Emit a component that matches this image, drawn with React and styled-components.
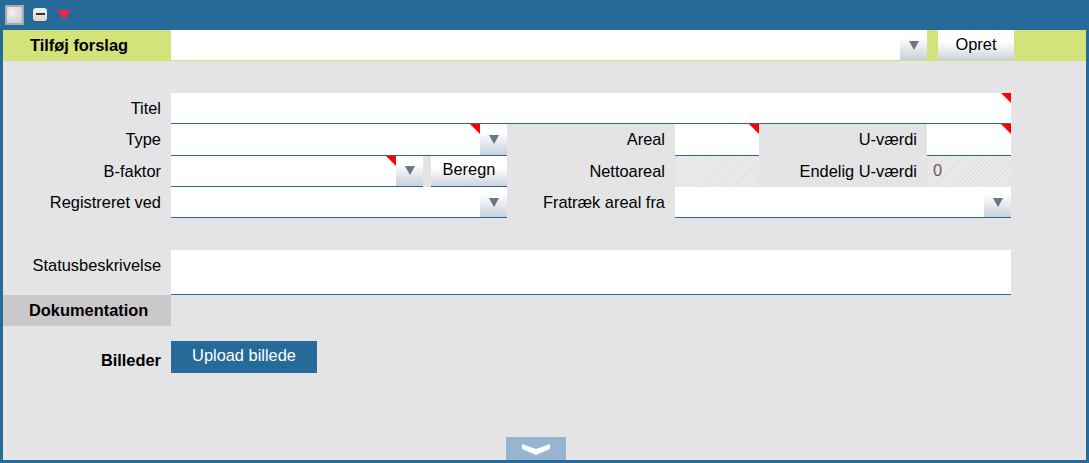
import React from "react";
import styled, { createGlobalStyle, css } from "styled-components";

const Global = createGlobalStyle`
  html, body { margin: 0; padding: 0; background: #e4e3e5; }
  body { font-family: "Liberation Sans", Arial, sans-serif; font-size: 16.4px; color: #000; overflow: hidden; }
`;

const Frame = styled.div`
  width: 1089px;
  height: 463px;
  box-sizing: border-box;
  background: #e4e3e5;
  border: solid #266a9a;
  border-width: 0 3px 3px 3px;
  display: flex;
  flex-direction: column;
  position: relative;
`;

const TopBar = styled.div`
  height: 30px;
  margin: 0 -3px;
  padding-left: 5px;
  background: #266a9a;
  display: flex;
  align-items: center;
  flex-shrink: 0;
`;

const WindowIcon = styled.div`
  width: 19px;
  height: 20px;
  box-sizing: border-box;
  margin-top: -1px;
  border: 2px solid #a9a9ad;
  background: radial-gradient(circle at 35% 35%, #f2f2f4, #c6c8cc);
`;

const MinIcon = styled.div`
  width: 14px;
  height: 13px;
  margin-left: 9px;
  margin-top: -2px;
  border-radius: 3px;
  background: linear-gradient(#e6eff6, #e2d8cc);
  display: flex;
  align-items: center;
  justify-content: center;
  &::before {
    content: "";
    width: 9px;
    height: 2px;
    background: #333;
  }
`;

const RedArrow = styled.svg`
  width: 14px;
  height: 10px;
  margin-left: 10px;
`;

const AddRow = styled.div`
  height: 31px;
  box-sizing: border-box;
  background: #d4e27b;
  display: flex;
  flex-shrink: 0;
`;

const AddTitle = styled.div`
  width: 168px;
  box-sizing: border-box;
  padding-left: 27px;
  line-height: 30px;
  font-weight: bold;
`;

const AddInput = styled.div`
  width: 756px;
  height: 30px;
  background: #fff;
  display: flex;
  justify-content: flex-end;
`;

const Button = styled.button`
  border: 0;
  padding: 0;
  margin: 0;
  font: inherit;
  color: #000;
  text-align: center;
  background: linear-gradient(#fff 0, #fff 40%, #cdd3dd 100%);
`;

const OpretButton = styled(Button)`
  width: 76px;
  height: 30px;
  margin-left: 11px;
  padding-bottom: 1px;
`;

const Arrow = styled.div`
  width: 27px;
  flex-shrink: 0;
  height: 100%;
  background: linear-gradient(#fff 0, #fff 25%, #c9d0da 100%);
  display: flex;
  align-items: center;
  justify-content: center;
  &::before {
    content: "";
    width: 0;
    height: 0;
    border-left: 5.5px solid transparent;
    border-right: 5.5px solid transparent;
    border-top: 9px solid #6b7585;
  }
`;

const FormGrid = styled.div`
  margin-top: 32px;
  display: grid;
  grid-template-columns: 168px 336px 168px 84px 168px 84px;
  grid-auto-rows: 31.33px;
`;

const Label = styled.div`
  padding-right: 10px;
  text-align: right;
  line-height: 30px;
  white-space: nowrap;
`;

const Field = styled.div`
  position: relative;
  box-sizing: border-box;
  background: #fff;
  border-bottom: 1px solid #266a9a;
  display: flex;
  justify-content: flex-end;
  grid-column: span ${(p) => p.$span || 1};
  flex: ${(p) => (p.$grow ? 1 : "initial")};
  ${(p) =>
    p.$required &&
    css`
      &::after {
        content: "";
        position: absolute;
        top: 0;
        right: ${p.$offset || 0}px;
        width: 0;
        height: 0;
        border-left: 10px solid transparent;
        border-top: 10px solid #f00;
      }
    `}
`;

const ReadOnly = styled.div`
  box-sizing: border-box;
  padding-left: 6px;
  line-height: 28px;
  color: #6c5a5a;
  background: repeating-linear-gradient(135deg, #eceaec 0 2px, #e0dfe1 2px 3px);
`;

const SplitCell = styled.div`
  display: flex;
  gap: 8px;
`;

const BeregnButton = styled(Button)`
  width: 76px;
  flex-shrink: 0;
  border-bottom: 1px solid #266a9a;
  padding-bottom: 2px;
`;

const StatusRow = styled.div`
  margin-top: 31.67px;
  display: flex;
`;

const StatusLabel = styled(Label)`
  width: 168px;
  box-sizing: border-box;
`;

const StatusField = styled.div`
  width: 840px;
  height: 45px;
  box-sizing: border-box;
  background: #fff;
  border-bottom: 1px solid #266a9a;
`;

const SectionTitle = styled.div`
  width: 168px;
  height: 31px;
  box-sizing: border-box;
  padding-left: 26px;
  line-height: 30px;
  font-weight: bold;
  background: #cac8ca;
`;

const UploadRow = styled.div`
  margin-top: 15px;
  display: flex;
`;

const UploadLabel = styled.div`
  width: 168px;
  box-sizing: border-box;
  padding-right: 10px;
  padding-top: 3px;
  text-align: right;
  line-height: 32px;
  font-weight: bold;
`;

const UploadButton = styled.button`
  width: 146px;
  height: 32px;
  border: 0;
  padding: 0 0 2px;
  font: inherit;
  color: #fff;
  background: #266a9a;
`;

const Expand = styled.div`
  position: absolute;
  left: 503px;
  bottom: 0;
  width: 60px;
  height: 23px;
  background: #97b5d0;
  display: flex;
  align-items: center;
  justify-content: center;
`;

export default function App() {
  return (
    <Frame>
      <Global />
      <TopBar>
        <WindowIcon />
        <MinIcon />
        <RedArrow viewBox="0 0 14 10">
          <path d="M0 0H14L7 10Z" fill="#f0224e" />
        </RedArrow>
      </TopBar>
      <AddRow>
        <AddTitle>Tilføj forslag</AddTitle>
        <AddInput>
          <Arrow />
        </AddInput>
        <OpretButton>Opret</OpretButton>
      </AddRow>
      <FormGrid>
        <Label>Titel</Label>
        <Field $span={5} $required />

        <Label>Type</Label>
        <Field $required $offset={27}>
          <Arrow />
        </Field>
        <Label>Areal</Label>
        <Field $required />
        <Label>U-værdi</Label>
        <Field $required />

        <Label>B-faktor</Label>
        <SplitCell>
          <Field $grow $required $offset={27}>
            <Arrow />
          </Field>
          <BeregnButton>Beregn</BeregnButton>
        </SplitCell>
        <Label>Nettoareal</Label>
        <ReadOnly />
        <Label>Endelig U-værdi</Label>
        <ReadOnly>0</ReadOnly>

        <Label>Registreret ved</Label>
        <Field>
          <Arrow />
        </Field>
        <Label>Fratræk areal fra</Label>
        <Field $span={3}>
          <Arrow />
        </Field>
      </FormGrid>
      <StatusRow>
        <StatusLabel>Statusbeskrivelse</StatusLabel>
        <StatusField />
      </StatusRow>
      <SectionTitle>Dokumentation</SectionTitle>
      <UploadRow>
        <UploadLabel>Billeder</UploadLabel>
        <UploadButton>Upload billede</UploadButton>
      </UploadRow>
      <Expand>
        <svg width="30" height="14" viewBox="0 0 30 14">
          <path d="M1 2L15 7L29 2V7L15 13L1 7Z" fill="#fff" />
        </svg>
      </Expand>
    </Frame>
  );
}
